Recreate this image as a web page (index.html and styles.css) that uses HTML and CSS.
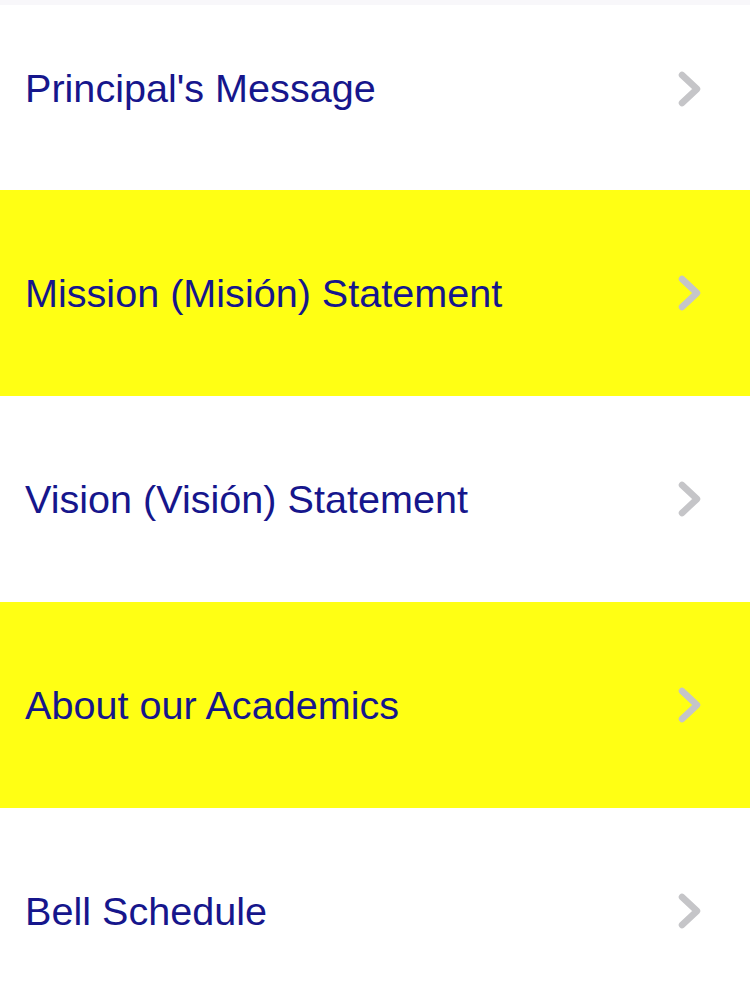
FILE: index.html
```html
<!DOCTYPE html>
<html>
<head>
<meta charset="utf-8">
<link rel="stylesheet" href="styles.css">
</head>
<body>
<div class="topline"></div>
<ul class="menu">
  <li class="row first"><span class="label">Principal's Message</span><svg class="chev" viewBox="0 0 24 36"><path d="M4 4 L19 18 L4 32"/></svg></li>
  <li class="row alt"><span class="label">Mission (Misión) Statement</span><svg class="chev" viewBox="0 0 24 36"><path d="M4 4 L19 18 L4 32"/></svg></li>
  <li class="row"><span class="label">Vision (Visión) Statement</span><svg class="chev" viewBox="0 0 24 36"><path d="M4 4 L19 18 L4 32"/></svg></li>
  <li class="row alt"><span class="label">About our Academics</span><svg class="chev" viewBox="0 0 24 36"><path d="M4 4 L19 18 L4 32"/></svg></li>
  <li class="row"><span class="label">Bell Schedule</span><svg class="chev" viewBox="0 0 24 36"><path d="M4 4 L19 18 L4 32"/></svg></li>
</ul>
</body>
</html>
```
FILE: styles.css
```css
html, body {
  margin: 0;
  padding: 0;
  background: #ffffff;
  overflow: hidden;
}
body {
  font-family: "Liberation Sans", Arial, sans-serif;
}
.topline {
  height: 5px;
  background: #f8f7fa;
}
.menu {
  list-style: none;
  margin: 0;
  padding: 0;
}
.row {
  height: 206px;
  display: flex;
  align-items: center;
  justify-content: space-between;
  padding: 0 48px 0 25px;
  box-sizing: border-box;
  background: #ffffff;
}
.row.first {
  height: 185px;
  align-items: flex-start;
}
.row.first .label {
  margin-top: 57px;
}
.row.first .chev {
  margin-top: 66px;
}
.row.alt {
  background: #ffff14;
}
.label {
  font-size: 39.6px;
  color: #16168c;
  line-height: 52px;
}
.chev {
  width: 24px;
  height: 36px;
  flex: none;
}
.chev path {
  fill: none;
  stroke: #c5c5c8;
  stroke-width: 6.5;
  stroke-linecap: round;
  stroke-linejoin: round;
}
```
